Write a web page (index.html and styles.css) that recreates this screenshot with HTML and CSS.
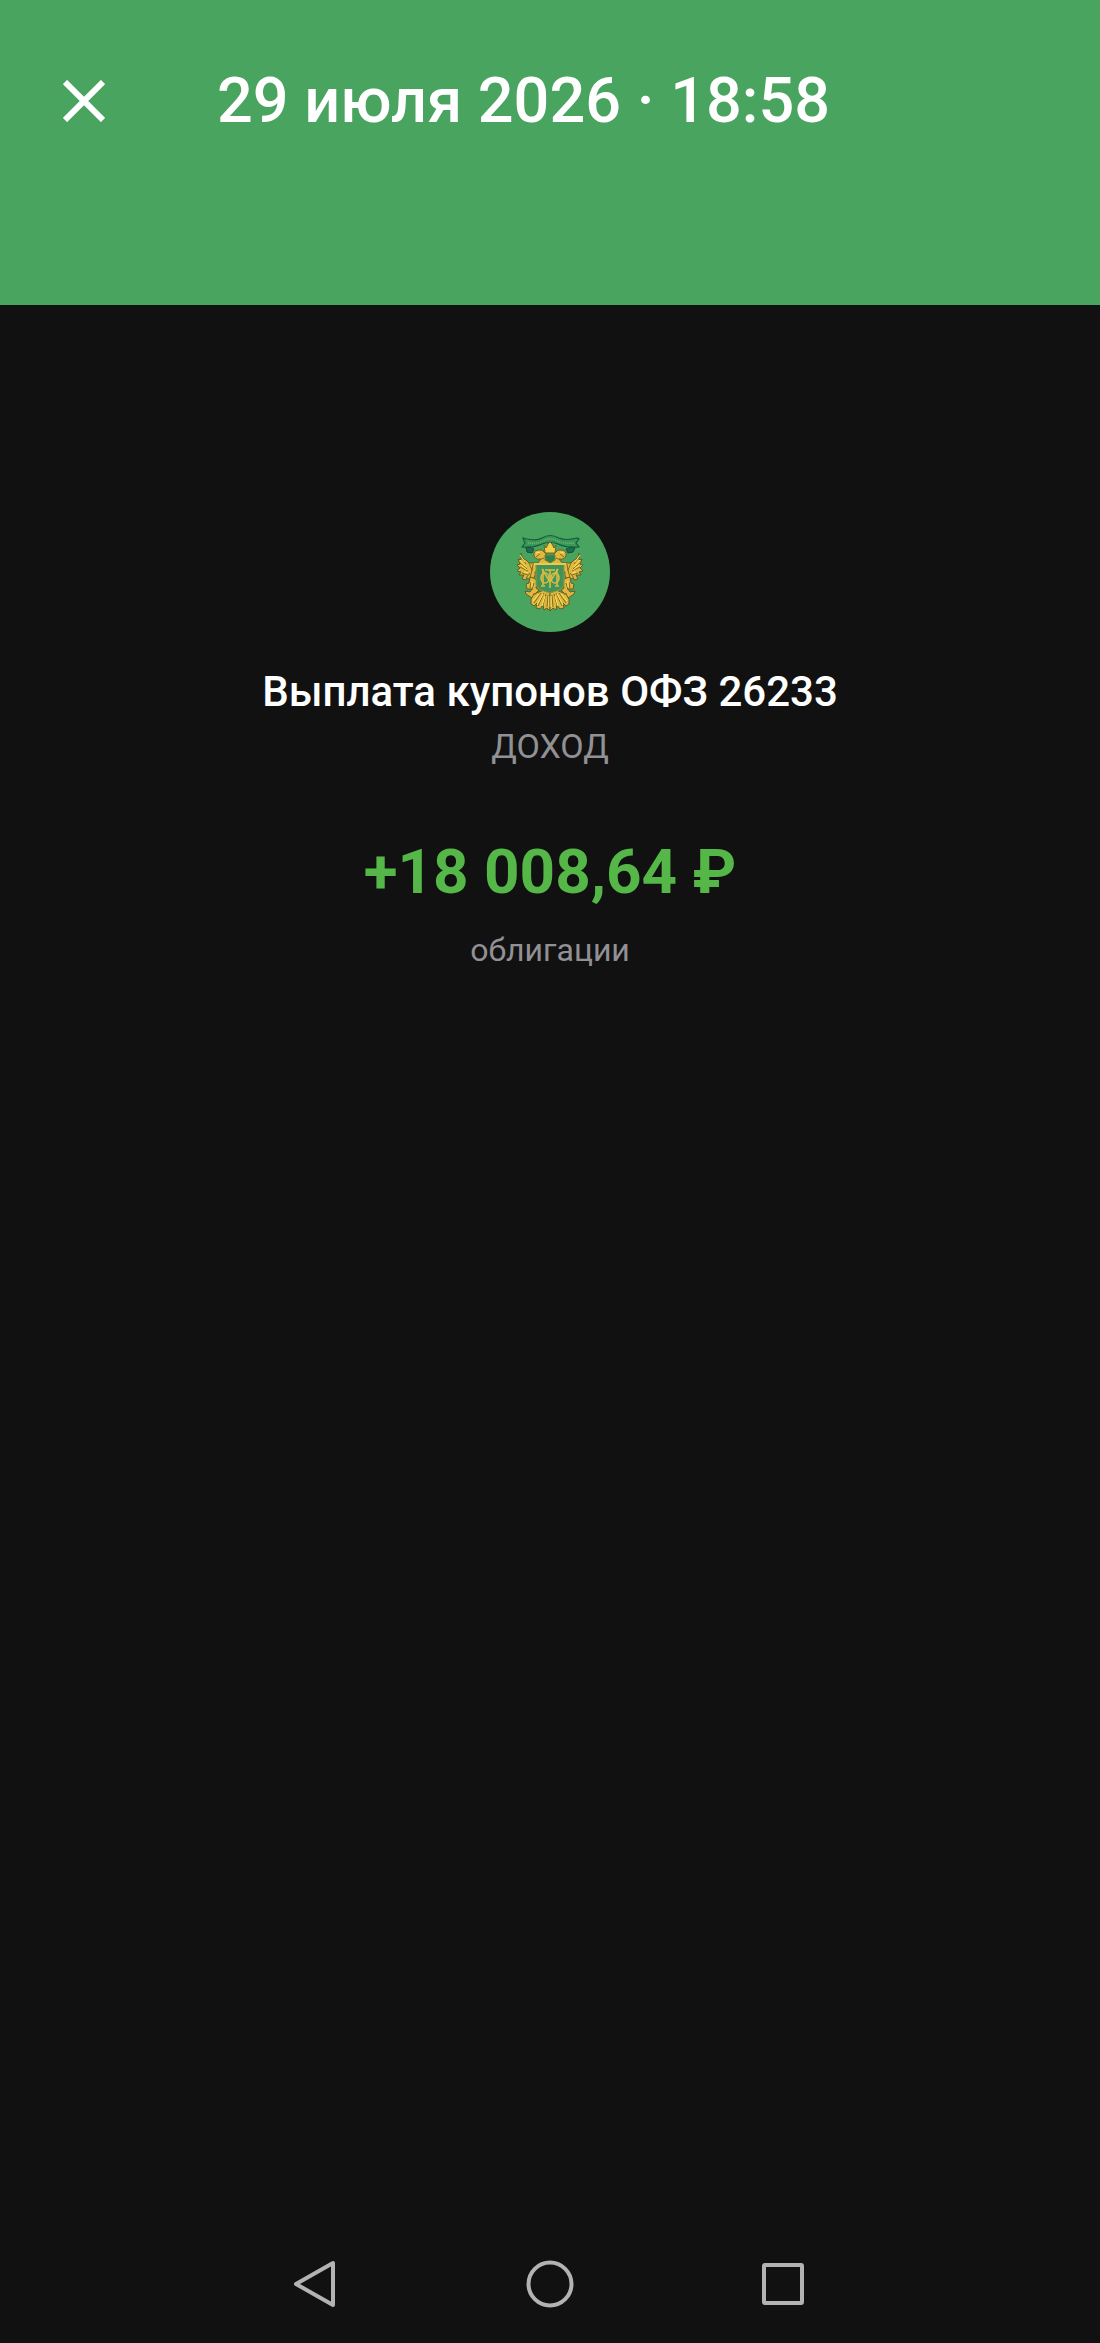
FILE: index.html
```html
<!DOCTYPE html>
<html lang="ru">
<head>
    <meta charset="UTF-8">
    <meta name="viewport" content="width=device-width, initial-scale=1.0">
    <title>Выплата купонов ОФЗ 26233</title>
    <link rel="stylesheet" href="styles.css">
</head>
<body>
    <header class="header">
        <button class="icon-button" type="button" aria-label="Закрыть">
            <svg width="42" height="42" viewBox="0 0 42 42" fill="none" stroke="#fff" stroke-width="6">
                <path d="M2 2L40 40M40 2L2 40"/>
            </svg>
        </button>
        <h1 class="date">29 июля 2026 · 18:58</h1>
    </header>

    <main class="operation">
        <!-- Эмблема Минфина -->
        <svg class="logo" viewBox="0 0 120 120" aria-hidden="true">
            <circle cx="60" cy="60" r="60" fill="#48a45e"/>
            <!-- лента -->
            <path d="M33 26L37 27Q47 29 52 26Q60 21 69 26Q76 29 87 26L89 27L86 31L89 35Q76 36 68 32Q60 29 52 32Q44 36 32 35L35 31Z" fill="#3b9659" stroke="#145c3d" stroke-width="1.2"/>
            <path d="M38 31Q47 32 53 29Q60 25 68 29Q74 32 84 31" fill="none" stroke="#79b66a" stroke-width="1.5" stroke-dasharray="1 1"/>
            <path d="M36 36L40 35L44 37L42 41L37 40ZM76 37L81 35L85 36L83 40L78 41Z" fill="#19704d" stroke="#174f37"/>
            <g id="wing">
                <g fill="#dfb83d" stroke="#675d25" stroke-width="1">
                    <path d="M31 41Q32 47 36 48L39 51L50 51L48 57L45 60Q46 66 41 68L37 66L36 68L32 67L34 63L29 63L31 60L27 59L30 56L27 53L30 52L28 47L31 48Z"/>
                    <path d="M51 47Q46 48 44 44Q43 39 48 38L52 38L56 42L55 48L60 50L59 53L47 52Z"/>
                    <path d="M40 65Q47 66 47 71L46 76L49 78L46 81L48 84L42 86L36 82L35 79L40 80L42 77L37 77L36 72L39 71Z"/>
                    <path d="M49 80L44 82L41 87L41 92L44 94L47 91L46 96L50 97L53 93L54 98L57 96L60 99L60 79L54 78Z"/>
                </g>
                <path d="M31 45L36 52M29 50L37 57M30 55L38 59M32 61L38 63M36 66L40 61M39 51L42 58L40 66M43 52L42 59M41 70L40 76M44 71L42 78M43 82L46 82M51 81L44 91M54 81L48 94M56 82L53 93M58 83L57 95M46 45L50 42M49 48L54 46" fill="none" stroke="#806b28" stroke-width="1"/>
                <path d="M30 43L35 50M30 48L36 55M31 53L37 58M34 60L38 61M46 41L50 40M42 69L42 75M49 82L43 89M53 82L47 93M55 84L52 94M59 84L59 95" fill="none" stroke="#ffe45a" stroke-width="1"/>
            </g>
            <use href="#wing" transform="translate(120 0) scale(-1 1)"/>
            <!-- корона и щит -->
            <path d="M54 33L56 36L58 32L60 30L62 32L64 36L66 33L65 41L55 41Z" fill="#f3cf46" stroke="#756225" stroke-width="1"/>
            <path d="M55 43H65V47Q63 50 60 51Q56 49 55 46Z" fill="#278350" stroke="#7a812e"/>
            <path d="M46 52H74V73Q72 78 60 81Q48 78 46 73Z" fill="#40945a" stroke="#98933b" stroke-width="1"/>
            <path d="M44 52H76" stroke="#ebc94a" stroke-width="2"/>
            <g fill="none" stroke="#d7bd45" stroke-width="1.6">
                <path d="M52 57L60 70L68 57M53 57V73M67 57V73M60 58V76M51 74H55M65 74H69M55 58H65"/>
                <ellipse cx="55" cy="66" rx="4" ry="5"/>
                <ellipse cx="65" cy="66" rx="4" ry="5"/>
            </g>
        </svg>
        <h2 class="name">Выплата купонов ОФЗ 26233</h2>
        <p class="caption">ДОХОД</p>
        <p class="amount">+18 008,64 ₽</p>
        <p class="caption account">облигации</p>
    </main>

    <nav class="navbar">
        <button class="icon-button" type="button" aria-label="Назад">
            <svg width="48" height="48" viewBox="0 0 48 48">
                <path d="M41 3V45L4 24Z"/>
            </svg>
        </button>
        <button class="icon-button" type="button" aria-label="Домой">
            <svg width="48" height="48" viewBox="0 0 48 48">
                <circle cx="24" cy="24" r="21.5"/>
            </svg>
        </button>
        <button class="icon-button" type="button" aria-label="Недавние">
            <svg width="48" height="48" viewBox="0 0 48 48">
                <rect x="4" y="5" width="38" height="38" rx="1"/>
            </svg>
        </button>
    </nav>
</body>
</html>
```

FILE: styles.css
```css
* {
    box-sizing: border-box;
}

body {
    display: flex;
    flex-direction: column;
    min-height: 100vh;
    margin: 0;
    background-color: #111;
    color: #fff;
    font-family: Roboto, "Noto Sans", sans-serif;
}

h1, h2, p {
    margin: 0;
}

.icon-button {
    display: flex;
    padding: 0;
    border: none;
    background: none;
    cursor: pointer;
}

.header {
    display: flex;
    align-items: center;
    gap: 112px;
    padding: 61px 63px 164px;
    background-color: #48a45e;
}

.date {
    font-size: 63px;
    line-height: 80px;
    font-weight: 500;
}

.operation {
    display: flex;
    flex: 1;
    flex-direction: column;
    align-items: center;
    padding: 207px 24px 24px;
    text-align: center;
}

.logo {
    width: 120px;
    height: 120px;
}

.name {
    margin-top: 32px;
    font-size: 42px;
    line-height: 56px;
    font-weight: 500;
}

.caption {
    color: #919195;
    font-size: 34px;
    line-height: 52px;
}

.amount {
    margin: 60px 0 12px;
    color: #55b748;
    font-size: 62px;
    line-height: 80px;
    font-weight: 700;
}

.account {
    font-size: 32px;
}

.navbar {
    display: flex;
    justify-content: center;
    gap: 186px;
    padding-bottom: 35px;
}

.navbar svg {
    fill: none;
    stroke: #b3b3b3;
    stroke-width: 4;
    stroke-linejoin: round;
}
```
